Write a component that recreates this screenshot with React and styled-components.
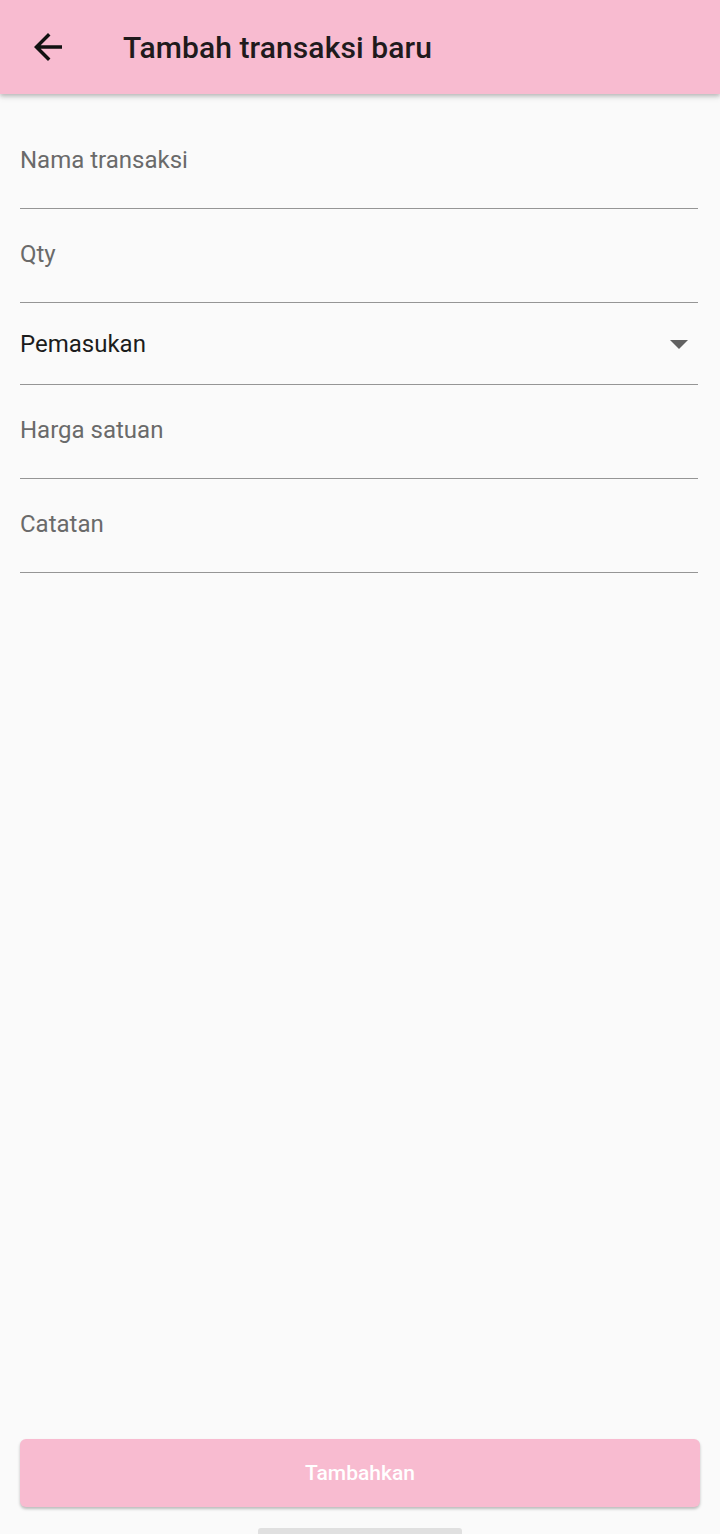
import React from "react";
import styled, { createGlobalStyle } from "styled-components";

const GlobalStyle = createGlobalStyle`
  html, body {
    margin: 0;
    padding: 0;
    background: #fafafa;
  }
  body {
    font-family: Roboto, "Noto Sans", sans-serif;
  }
`;

const Screen = styled.div`
  width: 720px;
  height: 1534px;
  display: flex;
  flex-direction: column;
  background: #fafafa;
  overflow: hidden;
`;

const AppBar = styled.header`
  height: 94px;
  flex-shrink: 0;
  display: flex;
  align-items: center;
  background: #f8bbd0;
  box-shadow: 0 2px 4px rgba(0, 0, 0, 0.2), 0 4px 6px rgba(0, 0, 0, 0.08);
  position: relative;
  z-index: 1;
`;

const BackButton = styled.button`
  width: 42px;
  height: 42px;
  margin-left: 27px;
  padding: 0;
  border: none;
  background: none;
  display: flex;
  color: #111;
`;

const Title = styled.h1`
  margin: 0 0 0 54px;
  font-size: 30px;
  font-weight: 500;
  color: #201a1c;
  letter-spacing: 0.1px;
`;

const Form = styled.main`
  flex: 1;
  display: flex;
  flex-direction: column;
  padding: 21px 22px 0 20px;
`;

const Field = styled.div`
  display: flex;
  align-items: center;
  justify-content: space-between;
  padding: ${(p) => (p.$select ? "27px 0 26px" : "31px 0 34px")};
  border-bottom: 1px solid #959595;
`;

const Label = styled.span`
  font-size: 24px;
  line-height: 28px;
  color: ${(p) => (p.$filled ? "#1c1c1c" : "#6a6a6a")};
`;

const Caret = styled.span`
  width: 0;
  height: 0;
  margin-right: 10px;
  border-left: 9px solid transparent;
  border-right: 9px solid transparent;
  border-top: 9px solid #616161;
`;

const Footer = styled.footer`
  display: flex;
  flex-direction: column;
  align-items: center;
  padding: 0 20px;
`;

const SubmitButton = styled.button`
  width: 680px;
  height: 68px;
  border: none;
  border-radius: 6px;
  background: #f8bbd0;
  color: #fff;
  font-family: Roboto, sans-serif;
  font-size: 21px;
  font-weight: 500;
  box-shadow: 0 2px 3px rgba(0, 0, 0, 0.25);
`;

const Handle = styled.div`
  width: 204px;
  height: 6px;
  margin-top: 21px;
  border-radius: 3px 3px 0 0;
  background: #e0e0e0;
`;

const fields = [
  { label: "Nama transaksi" },
  { label: "Qty" },
  { label: "Pemasukan", select: true },
  { label: "Harga satuan" },
  { label: "Catatan" },
];

export default function App() {
  return (
    <Screen>
      <GlobalStyle />
      <AppBar>
        <BackButton aria-label="Kembali">
          <svg width="42" height="42" viewBox="0 0 24 24" fill="currentColor">
            <path d="M20 11H7.83l5.59-5.59L12 4l-8 8 8 8 1.41-1.41L7.83 13H20v-2z" />
          </svg>
        </BackButton>
        <Title>Tambah transaksi baru</Title>
      </AppBar>
      <Form>
        {fields.map((f) => (
          <Field key={f.label} $select={f.select}>
            <Label $filled={f.select}>{f.label}</Label>
            {f.select && <Caret />}
          </Field>
        ))}
      </Form>
      <Footer>
        <SubmitButton>Tambahkan</SubmitButton>
        <Handle />
      </Footer>
    </Screen>
  );
}
